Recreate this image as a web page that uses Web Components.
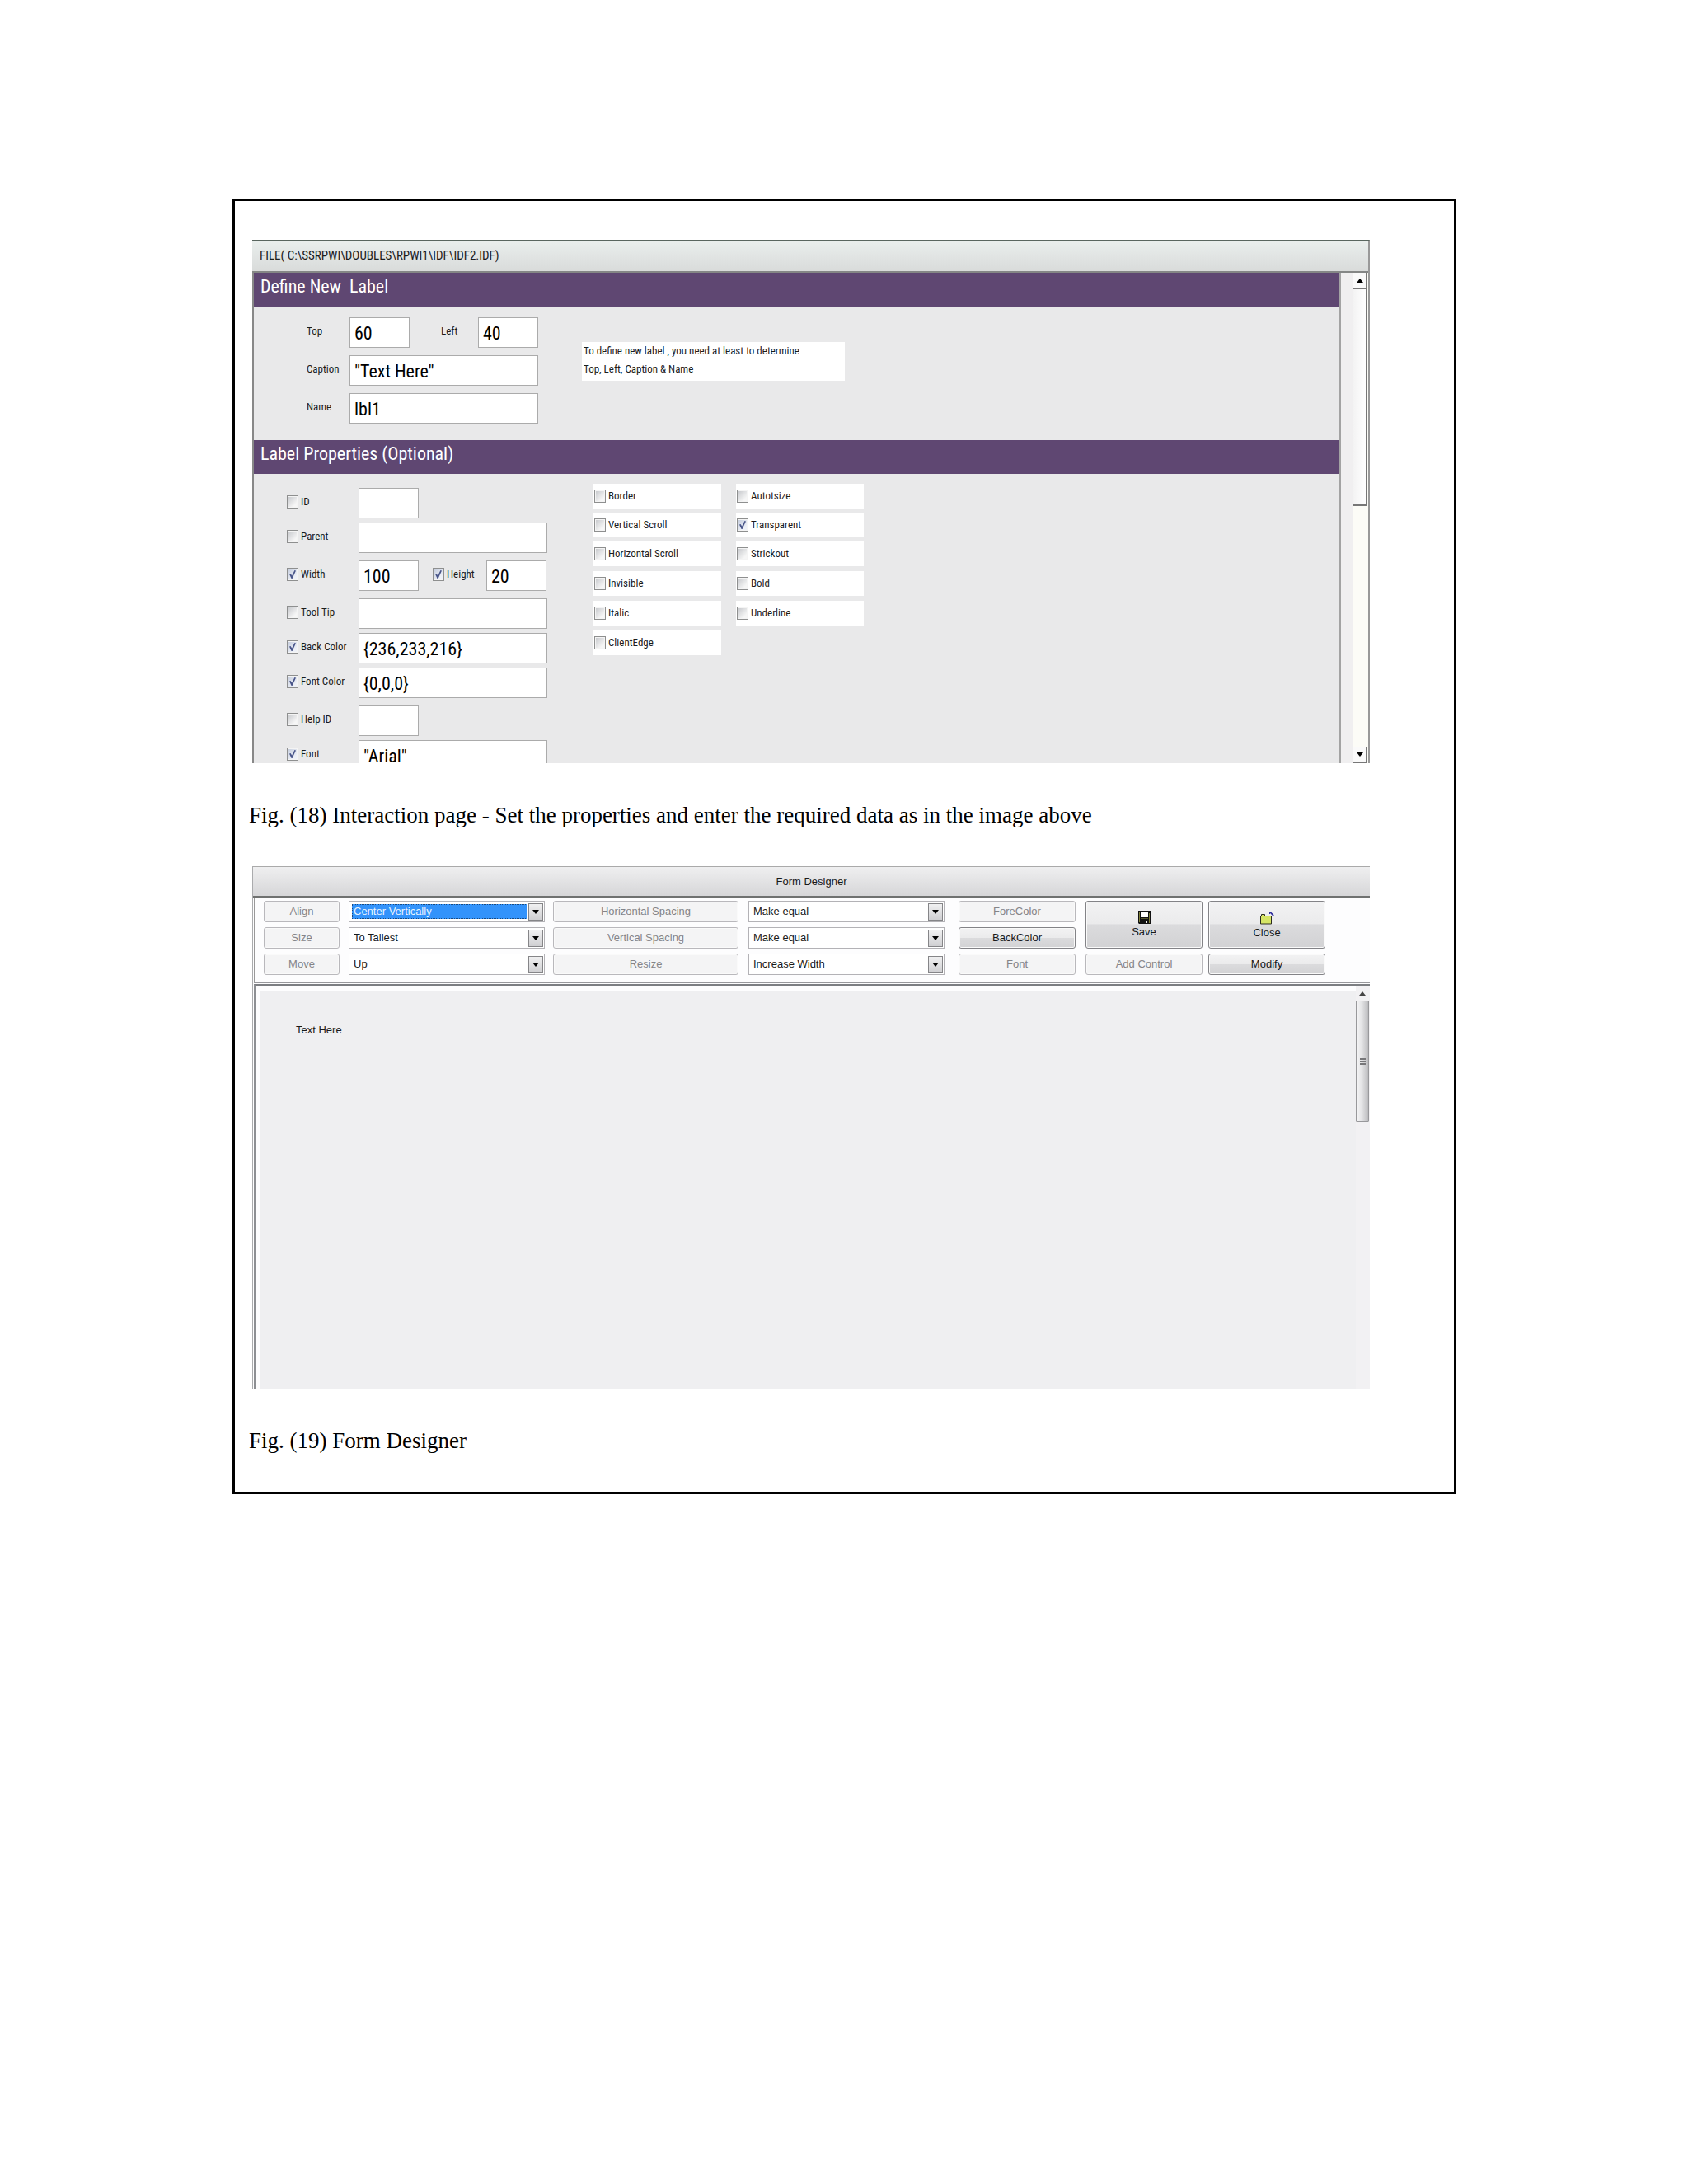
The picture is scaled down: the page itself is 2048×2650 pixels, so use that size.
<!DOCTYPE html>
<html lang="en">
<head>
<meta charset="utf-8">
<title>Form Designer guide</title>
<style>
  body { margin: 0; background: #fff; --narrow: "Roboto Condensed", Roboto, "Liberation Sans", sans-serif; }
</style>
</head>
<body>
<guide-page>
  <guide-figure caption="Fig. (18) Interaction page - Set the properties and enter the required data as in the image above">
    <label-window></label-window>
  </guide-figure>
  <guide-figure caption="Fig. (19) Form Designer">
    <designer-window></designer-window>
  </guide-figure>
</guide-page>

<script>
const define = (name, render) => customElements.define(name, class extends HTMLElement {
  connectedCallback() {
    if (this.shadowRoot) return;
    this.attachShadow({ mode: 'open' }).innerHTML =
      '<style>*{box-sizing:border-box}:host{display:block;box-sizing:border-box}</style>' + render(this);
  }
});
const esc = s => (s || '').replace(/&/g, '&amp;').replace(/"/g, '&quot;').replace(/</g, '&lt;');

/* Bordered sheet that holds the figures */
define('guide-page', () => `
  <style>
    :host { padding: 241px 281px 0 282px; }
    main { border: 3px solid #000; padding: 0 102px 47px 17px; }
  </style>
  <main><slot></slot></main>`);

define('guide-figure', el => `
  <style>
    figure { margin: 0; padding-top: 47px; }
    .shot { margin-left: 4px; }
    figcaption { margin-top: 48px; font: 27px/30px "Liberation Serif", serif; color: #000; white-space: nowrap; }
  </style>
  <figure><div class="shot"><slot></slot></div><figcaption>${esc(el.getAttribute('caption'))}</figcaption></figure>`);

/* Tick box with its label */
define('tick-box', el => `
  <style>
    label { display: flex; align-items: center; gap: 3px; white-space: nowrap; }
    input { appearance: none; flex: none; display: grid; place-items: center; width: 14px; height: 16px; margin: 0;
      border: 1px solid #8e8f8f; outline: 1px solid #f4f4f4; outline-offset: -2px; background: linear-gradient(135deg, #c4c6ca, #f6f6f6 75%); }
    input:checked { background: linear-gradient(135deg, #c3cbdc, #eef1f8 75%); }
    input:checked::before { content: ""; width: 8px; height: 10px; background: #4a568a;
      clip-path: polygon(0 45%, 20% 40%, 40% 65%, 80% 0, 100% 5%, 45% 100%, 32% 100%); }
  </style>
  <label><input type="checkbox" ${el.hasAttribute('checked') ? 'checked' : ''}><span>${esc(el.getAttribute('label'))}</span></label>`);

/* White strip around a tick box */
define('option-tile', el => `
  <style>
    :host { height: 30px; padding: 7px 1px; background: #fff; }
    tick-box { line-height: 16px; }
  </style>
  <tick-box label="${esc(el.getAttribute('label'))}" ${el.hasAttribute('checked') ? 'checked' : ''}></tick-box>`);

define('value-box', el => `
  <style>
    :host { width: 229px; height: 37px; }
    :host([short]) { width: 73px; }
    input { display: block; width: 100%; height: 100%; margin: 0; padding: 2px 5px 0; border: 1px solid #ababab;
      border-radius: 0; background: #fff; color: #000; font: 22px var(--narrow); outline: none; }
  </style>
  <input type="text" aria-label="${esc(el.getAttribute('name'))}" value="${esc(el.getAttribute('value'))}">`);

define('section-bar', () => `
  <style>
    :host { height: 41px; padding-left: 8px; background: #5f4772; color: #fff; }
    h2 { margin: 0; font: 22px/33px var(--narrow); white-space: pre; }
  </style>
  <h2><slot></slot></h2>`);

define('classic-scroll', () => `
  <style>
    :host { display: flex; flex-direction: column; width: 18px; padding-right: 1px; background: #fcfcf7; }
    .btn { display: grid; place-items: center; height: 20px; flex: none; }
    .btn, .thumb { background: #fafafa; border-right: 2px solid #777; border-bottom: 2px solid #777; }
    .thumb { height: 263px; background: linear-gradient(90deg, #f3f3f3, #fff); }
    .track { flex: 1; }
    svg { display: block; }
  </style>
  <div class="btn"><svg width="8" height="5"><path d="M0 5L4 0L8 5Z"/></svg></div>
  <div class="thumb"></div><div class="track"></div>
  <div class="btn"><svg width="8" height="5"><path d="M0 0L4 5L8 0Z"/></svg></div>`);

define('label-window', () => `
  <style>
    :host { height: 635px; overflow: hidden; display: flex; flex-direction: column; border-top: 2px solid #59665f; border-right: 2px solid #999;
      background: #e9e9ea; color: #1c1c1c; font: 13px var(--narrow); }
    header { height: 38px; flex: none; padding-left: 9px; font-size: 15px; line-height: 34px; border-bottom: 2px solid #858786;
      background: linear-gradient(#e9eeec, #d9dbda); }
    .body { display: flex; height: 595px; border-left: 2px solid #888; }
    .form { flex: 1; min-width: 0; border-right: 2px solid #a3a3a3; }
    .gutter { width: 15px; background: #f0eff0; }
    .block { display: flex; align-items: flex-start; }
    .first { height: 162px; padding: 13px 0 0 64px; gap: 53px; }
    .second { padding: 17px 0 0 40px; gap: 56px; }
    .stack { display: flex; flex-direction: column; gap: 9px; }
    .tight { gap: 5px; }
    .row { display: flex; }
    .row > span, .row > tick-box { line-height: 34px; }
    .first span { width: 52px; }
    .first .inner { width: 45px; margin-left: 38px; }
    .second tick-box { width: 87px; }
    .second .inner { width: 65px; margin-left: 17px; }
    p { width: 319px; margin: 30px 0 0; padding: 0 0 3px 2px; line-height: 22px; background: #fff; }
    .tiles { display: flex; flex-direction: column; gap: 6px; margin-top: -5px; }
    .grid { display: grid; grid-template-columns: 155px 155px; column-gap: 18px; row-gap: 5px; }
    .grid + .grid { row-gap: 6px; }
  </style>
  <header>FILE( C:\\SSRPWI\\DOUBLES\\RPWI1\\IDF\\IDF2.IDF)</header>
  <div class="body">
    <div class="form">
      <section-bar>Define New&nbsp; Label</section-bar>
      <div class="block first">
        <div class="stack">
          <div class="row"><span>Top</span><value-box short name="Top" value="60"></value-box><span class="inner">Left</span><value-box short name="Left" value="40"></value-box></div>
          <div class="row"><span>Caption</span><value-box name="Caption" value="&quot;Text Here&quot;"></value-box></div>
          <div class="row"><span>Name</span><value-box name="Name" value="lbl1"></value-box></div>
        </div>
        <p>To define new label , you need at least to determine<br>Top, Left, Caption &amp; Name</p>
      </div>
      <section-bar>Label Properties (Optional)</section-bar>
      <div class="block second">
        <div class="stack">
          <div class="stack tight">
            <div class="row"><tick-box label="ID"></tick-box><value-box short name="ID"></value-box></div>
            <div class="row"><tick-box label="Parent"></tick-box><value-box name="Parent"></value-box></div>
          </div>
          <div class="row"><tick-box checked label="Width"></tick-box><value-box short name="Width" value="100"></value-box><tick-box checked class="inner" label="Height"></tick-box><value-box short name="Height" value="20"></value-box></div>
          <div class="stack tight">
            <div class="row"><tick-box label="Tool Tip"></tick-box><value-box name="Tool Tip"></value-box></div>
            <div class="row"><tick-box checked label="Back Color"></tick-box><value-box name="Back Color" value="{236,233,216}"></value-box></div>
            <div class="row"><tick-box checked label="Font Color"></tick-box><value-box name="Font Color" value="{0,0,0}"></value-box></div>
          </div>
          <div class="stack tight">
            <div class="row"><tick-box label="Help ID"></tick-box><value-box short name="Help ID"></value-box></div>
            <div class="row"><tick-box checked label="Font"></tick-box><value-box name="Font" value="&quot;Arial&quot;"></value-box></div>
          </div>
        </div>
        <div class="tiles">
          <div class="grid">
            <option-tile label="Border"></option-tile><option-tile label="Autotsize"></option-tile>
            <option-tile label="Vertical Scroll"></option-tile><option-tile checked label="Transparent"></option-tile>
            <option-tile label="Horizontal Scroll"></option-tile><option-tile label="Strickout"></option-tile>
          </div>
          <div class="grid">
            <option-tile label="Invisible"></option-tile><option-tile label="Bold"></option-tile>
            <option-tile label="Italic"></option-tile><option-tile label="Underline"></option-tile>
            <option-tile label="ClientEdge"></option-tile>
          </div>
        </div>
      </div>
    </div>
    <div class="gutter"></div>
    <classic-scroll></classic-scroll>
  </div>`);

define('tool-button', el => `
  <style>
    :host { min-width: 0; }
    :host([tall]) { grid-row: span 2; }
    button { display: flex; flex-direction: column; align-items: center; justify-content: center; gap: 2px; width: 100%; height: 100%;
      margin: 0; padding: 0; border: 1px solid #838387; border-radius: 3px; box-shadow: inset 0 0 0 1px #fafafa; font: inherit; line-height: 16px; white-space: nowrap; color: #1a1a1a;
      background: linear-gradient(#f2f2f3, #ebebec 48%, #dbdbdd 50%, #d2d2d4); }
    button:disabled { border-color: #b9b8bc; color: #858488; background: #f4f4f5; }
  </style>
  <button type="button" ${el.hasAttribute('off') ? 'disabled' : ''}><slot name="icon"></slot><span>${esc(el.getAttribute('label'))}</span></button>`);

define('tool-select', el => `
  <style>
    :host { min-width: 0; }
    .box { display: grid; grid-template-columns: 1fr 18px; align-items: stretch; height: 26px; padding: 2px 1px 1px 3px; border: 1px solid #b3b2b6; background: #fff; }
    select { grid-area: 1 / 1 / 2 / 3; appearance: none; min-width: 0; width: 100%; margin: 0; padding: 0 20px 2px 2px; border: 0; border-radius: 0;
      background: none; color: #1a1a1a; font: inherit; outline: none; }
    .mark { grid-area: 1 / 1 / 2 / 2; margin: 1px 1px 2px 0; }
    :host([active]) .mark { background: #3393fb; border: 1px dotted #1a4a80; }
    :host([active]) select { color: #e8f3ff; z-index: 1; }
    .arrow { grid-area: 1 / 2 / 2 / 3; display: grid; place-items: center; border: 1px solid #858588; background: linear-gradient(#f0f0f1, #cfcfd2); pointer-events: none; z-index: 2; }
  </style>
  <div class="box">
    <span class="mark"></span>
    <select aria-label="${esc(el.getAttribute('name'))}"><option>${esc(el.getAttribute('value'))}</option></select>
    <span class="arrow"><svg width="8" height="5"><path d="M0 0H8L4 5Z"/></svg></span>
  </div>`);

define('save-icon', () => `
  <svg width="15" height="16" viewBox="0 0 15 16" style="display:block">
    <path d="M0 0H15V16H1L0 15Z" fill="#111"/><path d="M1 1H2V14H1ZM13 3H14V15H13Z" fill="#80803a"/><path d="M3 9H12V10H3Z" fill="#55552a"/>
    <path d="M3 1H12V8H3Z" fill="#fff"/><path d="M9 12H11V15H9Z" fill="#eee"/></svg>`);

define('close-icon', () => `
  <svg width="18" height="17" viewBox="0 0 18 17" style="display:block">
    <path d="M1.500 16V6.500H2.500V4.500H6.500V6.500H14.500V16Z" fill="#d6e566" stroke="#2c2c20"/>
    <path d="M2 6.500H14" stroke="#2c2c20"/>
    <path d="M12 1H16V2H14.500L17.500 5V6H16L13 3V4H12Z" fill="#30309c"/></svg>`);

define('soft-scroll', () => `
  <style>
    :host { display: flex; flex-direction: column; width: 17px; padding-right: 1px; background: #f2f1f3; }
    .up { display: grid; place-items: center; height: 18px; }
    .thumb { display: flex; flex-direction: column; justify-content: center; align-items: center; gap: 1px; height: 147px; border: 1px solid #98989b; border-radius: 1px;
      background: linear-gradient(90deg, #f7f7f8, #e0e0e2 50%, #b9b9bc); }
    i { width: 7px; height: 2px; background: #77777a; }
  </style>
  <div class="up"><svg width="8" height="5"><path d="M0 5L4 0L8 5Z" fill="#444"/></svg></div>
  <div class="thumb"><i></i><i></i><i></i></div>`);

define('designer-window', () => `
  <style>
    :host { height: 634px; display: flex; flex-direction: column; border-left: 1px solid #aaabad; background: #fdfdfe;
      color: #1a1a1a; font: 13px "Liberation Sans", sans-serif; }
    h2 { flex: none; height: 38px; margin: 0; border-top: 1px solid #aaa; border-bottom: 2px solid #6f7170; font: inherit; line-height: 36px; text-align: center;
      background: linear-gradient(#efeff0, #d6d6d8); }
    .tools { flex: none; display: grid; grid-auto-flow: dense; grid-template-rows: repeat(3, 26px); row-gap: 6px;
      grid-template-columns: 92fr 11fr 238fr 10fr 225fr 12fr 238fr 17fr 142fr 12fr 142fr 7fr 142fr;
      padding: 4px 54px 9px 11px; margin-left: 1px; border-left: 1px solid #999; border-bottom: 1px solid #98989c; }
    .c1 { grid-column: 1; } .c2 { grid-column: 3; } .c3 { grid-column: 5; } .c4 { grid-column: 7; }
    .c5 { grid-column: 9; } .c6 { grid-column: 11; } .c7 { grid-column: 13; }
    .canvas { flex: 1; display: flex; margin: 1px 0 0 1px; border-top: 2px solid #7c7e82; border-left: 2px solid #8d8f93; }
    .paper { flex: 1; margin: 7px 0 0 6px; padding: 39px 43px; line-height: 16px; background: #efeff1; }
  </style>
  <h2>Form Designer</h2>
  <div class="tools">
    <tool-button class="c1" off label="Align"></tool-button>
    <tool-select class="c2" active name="Align" value="Center Vertically"></tool-select>
    <tool-button class="c3" off label="Horizontal Spacing"></tool-button>
    <tool-select class="c4" name="Horizontal Spacing" value="Make equal"></tool-select>
    <tool-button class="c5" off label="ForeColor"></tool-button>
    <tool-button class="c6" tall label="Save"><save-icon slot="icon"></save-icon></tool-button>
    <tool-button class="c7" tall label="Close"><close-icon slot="icon"></close-icon></tool-button>
    <tool-button class="c1" off label="Size"></tool-button>
    <tool-select class="c2" name="Size" value="To Tallest"></tool-select>
    <tool-button class="c3" off label="Vertical Spacing"></tool-button>
    <tool-select class="c4" name="Vertical Spacing" value="Make equal"></tool-select>
    <tool-button class="c5" label="BackColor"></tool-button>
    <tool-button class="c1" off label="Move"></tool-button>
    <tool-select class="c2" name="Move" value="Up"></tool-select>
    <tool-button class="c3" off label="Resize"></tool-button>
    <tool-select class="c4" name="Resize" value="Increase Width"></tool-select>
    <tool-button class="c5" off label="Font"></tool-button>
    <tool-button class="c6" off label="Add Control"></tool-button>
    <tool-button class="c7" label="Modify"></tool-button>
  </div>
  <div class="canvas"><div class="paper">Text Here</div><soft-scroll></soft-scroll></div>`);
</script>
</body>
</html>
